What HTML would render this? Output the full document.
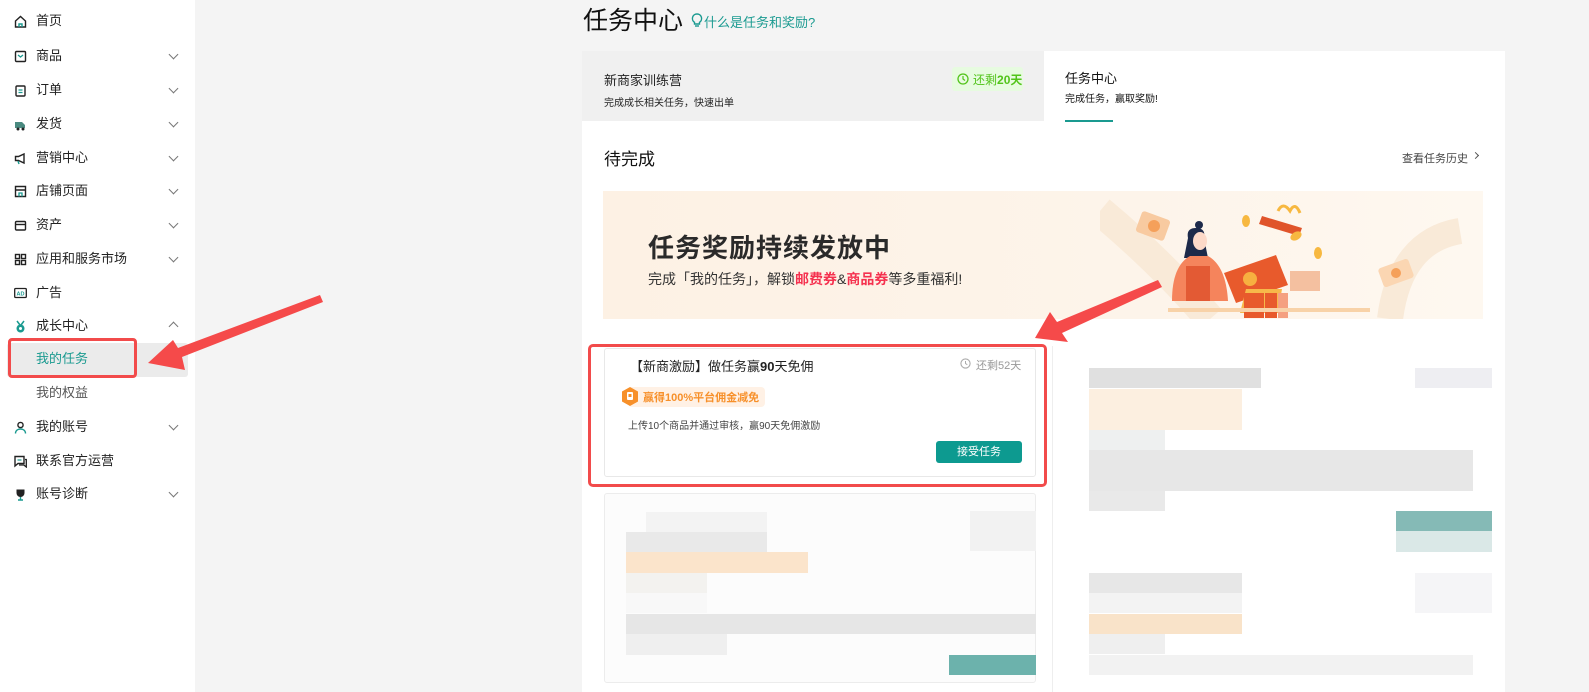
<!DOCTYPE html>
<html><head><meta charset="utf-8"><style>
*{margin:0;padding:0;box-sizing:border-box}
body{width:1589px;height:692px;overflow:hidden;background:#f4f4f4;font-family:"Liberation Sans","Noto Sans CJK SC",sans-serif;color:#222;position:relative}
.a{position:absolute}
#side{left:0;top:0;width:195px;height:692px;background:#fff}
.it{position:absolute;left:36px;font-size:13px;color:#222;line-height:16px}
.ic{position:absolute;left:14px;width:13px;height:13px}
.ch{position:absolute;left:170px;width:7px;height:7px;border-right:1.3px solid #777;border-bottom:1.3px solid #777;transform:rotate(45deg)}
.px{position:absolute}
</style></head><body>
<div id="side" class="a">
<div class="a" style="left:7px;top:343px;width:181px;height:34px;background:#ebebeb;border-radius:3px"></div>
<svg class="ic" style="top:15px" viewBox="0 0 13 13"><path d="M1.5 6L6.5 1.5 11.5 6V12H1.5Z" fill="none" stroke="#222" stroke-width="1.4"/><path d="M5 12V9h3v3" fill="none" stroke="#1a9a90" stroke-width="1.4"/></svg><div class="it" style="top:13px">首页</div>
<svg class="ic" style="top:50px" viewBox="0 0 13 13"><rect x="1.5" y="1.5" width="10" height="10" rx="1" fill="none" stroke="#222" stroke-width="1.4"/><path d="M4 5l2.5 2 2.5-2" fill="none" stroke="#1a9a90" stroke-width="1.3"/></svg><div class="it" style="top:48px">商品</div><div class="ch" style="top:51px"></div>
<svg class="ic" style="top:84px" viewBox="0 0 13 13"><rect x="2" y="2" width="9" height="10" rx="1" fill="none" stroke="#222" stroke-width="1.4"/><path d="M4.5 6h4M4.5 8.5h4" stroke="#1a9a90" stroke-width="1.2"/></svg><div class="it" style="top:82px">订单</div><div class="ch" style="top:85px"></div>
<svg class="ic" style="top:118px" viewBox="0 0 13 13"><path d="M1 4h7l3 3v3H1Z" fill="#4a8a80"/><circle cx="4" cy="11" r="1.5" fill="#222"/><circle cx="9" cy="11" r="1.5" fill="#222"/></svg><div class="it" style="top:116px">发货</div><div class="ch" style="top:119px"></div>
<svg class="ic" style="top:152px" viewBox="0 0 13 13"><path d="M1.5 4.5h3L10 2v9L4.5 8.5h-3Z" fill="none" stroke="#222" stroke-width="1.4"/><path d="M4 9l1 3" stroke="#1a9a90" stroke-width="1.4"/></svg><div class="it" style="top:150px">营销中心</div><div class="ch" style="top:153px"></div>
<svg class="ic" style="top:185px" viewBox="0 0 13 13"><path d="M1.5 1.5h10v10h-10ZM1.5 5h10" fill="none" stroke="#222" stroke-width="1.4"/><path d="M5 11.5V8h3v3.5" fill="none" stroke="#1a9a90" stroke-width="1.3"/></svg><div class="it" style="top:183px">店铺页面</div><div class="ch" style="top:186px"></div>
<svg class="ic" style="top:219px" viewBox="0 0 13 13"><rect x="1.5" y="2.5" width="10" height="8.5" rx="1" fill="none" stroke="#222" stroke-width="1.4"/><path d="M1.5 5.5h10" stroke="#222" stroke-width="1.4"/></svg><div class="it" style="top:217px">资产</div><div class="ch" style="top:220px"></div>
<svg class="ic" style="top:253px" viewBox="0 0 13 13"><g fill="none" stroke="#222" stroke-width="1.4"><rect x="1.5" y="1.5" width="4" height="4"/><rect x="7.5" y="1.5" width="4" height="4"/><rect x="1.5" y="7.5" width="4" height="4"/><rect x="7.5" y="7.5" width="4" height="4"/></g></svg><div class="it" style="top:251px">应用和服务市场</div><div class="ch" style="top:254px"></div>
<svg class="ic" style="top:287px" viewBox="0 0 13 13"><rect x="0.7" y="1.5" width="11.6" height="9" rx="1" fill="none" stroke="#222" stroke-width="1.3"/><text x="6.5" y="8.7" font-size="5.5" text-anchor="middle" fill="#1a9a90" font-family="Liberation Sans" font-weight="bold">AD</text></svg><div class="it" style="top:285px">广告</div>
<svg class="ic" style="top:320px" viewBox="0 0 13 13"><path d="M3 1l3 4M10 1L7 5" stroke="#1a9a90" stroke-width="1.5"/><circle cx="6.5" cy="8.5" r="4" fill="#1a9a90"/><circle cx="6.5" cy="8.5" r="1.5" fill="#fff"/></svg><div class="it" style="top:318px">成长中心</div><div class="ch" style="top:323px;transform:rotate(225deg)"></div>
<div class="it" style="top:351px;color:#1a9a90">我的任务</div>
<div class="it" style="top:385px;color:#555">我的权益</div>
<svg class="ic" style="top:421px" viewBox="0 0 13 13"><circle cx="6.5" cy="4" r="2.6" fill="none" stroke="#222" stroke-width="1.4"/><path d="M1.5 12.5c0-3 2.2-4.5 5-4.5s5 1.5 5 4.5" fill="none" stroke="#1a9a90" stroke-width="1.4"/></svg><div class="it" style="top:419px">我的账号</div><div class="ch" style="top:422px"></div>
<svg class="ic" style="top:455px" viewBox="0 0 13 13"><path d="M1 1.5h9v7H4l-3 2.5Z" fill="none" stroke="#222" stroke-width="1.4"/><path d="M11 4.5h1.3v7.5l-2.5-2H5" fill="none" stroke="#222" stroke-width="1.3"/><path d="M3.5 5h4" stroke="#1a9a90" stroke-width="1.2"/></svg><div class="it" style="top:453px">联系官方运营</div>
<svg class="ic" style="top:488px" viewBox="0 0 13 13"><path d="M2.5 1.5h8v3.5a4 4 0 0 1-8 0Z" fill="#222"/><path d="M6.5 9v2.5M4 12h5" stroke="#1a9a90" stroke-width="1.4"/></svg><div class="it" style="top:486px">账号诊断</div><div class="ch" style="top:489px"></div>
</div>

<div class="a" style="left:583px;top:5px;font-size:25px;color:#111;line-height:32px">任务中心</div>
<svg class="a" style="left:691px;top:13px" width="12" height="15" viewBox="0 0 12 15"><path d="M6 1a4.5 4.5 0 0 0-2.5 8.3V11h5V9.3A4.5 4.5 0 0 0 6 1Z" fill="none" stroke="#1a9a90" stroke-width="1.4"/><path d="M4 13h4" stroke="#1a9a90" stroke-width="1.4"/></svg>
<div class="a" style="left:704px;top:12px;font-size:13px;color:#1a9a90">什么是任务和奖励?</div>

<div class="a" style="left:582px;top:51px;width:923px;height:641px;background:#fff"></div>
<div class="a" style="left:582px;top:51px;width:462px;height:70px;background:#f0f0f0"></div>
<div class="a" style="left:604px;top:70px;font-size:13px;color:#222">新商家训练营</div>
<div class="a" style="left:604px;top:94px;font-size:10px;color:#222">完成成长相关任务，快速出单</div>
<div class="a" style="left:952px;top:67px;width:71px;height:24px;background:#e7fbe0;border-radius:3px"></div>
<svg class="a" style="left:957px;top:73px" width="12" height="12" viewBox="0 0 12 12"><circle cx="6" cy="6" r="5" fill="none" stroke="#52c41a" stroke-width="1.3"/><path d="M6 3v3l2 1.5" fill="none" stroke="#52c41a" stroke-width="1.2"/></svg>
<div class="a" style="left:973px;top:71px;font-size:12px;color:#52c41a">还剩<b>20天</b></div>
<div class="a" style="left:1065px;top:68px;font-size:13px;color:#111">任务中心</div>
<div class="a" style="left:1065px;top:90px;font-size:10px;color:#111">完成任务，赢取奖励!</div>
<div class="a" style="left:1065px;top:120px;width:48px;height:2px;background:#1a9a90"></div>

<div class="a" style="left:604px;top:145px;font-size:17px;color:#111">待完成</div>
<div class="a" style="left:1402px;top:150px;font-size:11px;color:#444">查看任务历史</div>
<div class="a" style="left:1473px;top:153px;width:5px;height:5px;border-right:1.2px solid #555;border-top:1.2px solid #555;transform:rotate(45deg)"></div>

<div class="a" style="left:603px;top:191px;width:880px;height:128px;background:linear-gradient(90deg,#fdf1e4,#fdf4ea 60%,#fef8f0)"></div>
<div class="a" style="left:648px;top:228px;font-size:26px;font-weight:bold;color:#2a2a2a;letter-spacing:1px">任务奖励持续发放中</div>
<div class="a" style="left:648px;top:269px;font-size:14px;color:#333">完成「我的任务」，解锁<b style="color:#f5314f">邮费券</b>&amp;<b style="color:#f5314f">商品券</b>等多重福利!</div>
<svg class="a" style="left:1100px;top:191px" width="383" height="128" viewBox="0 0 383 128">
<path d="M0 20 Q60 70 110 128" stroke="#f9ead8" stroke-width="30" fill="none"/>
<path d="M290 128 Q300 50 360 40" stroke="#f9ead8" stroke-width="26" fill="none"/>
<rect x="38" y="24" width="30" height="22" rx="3" fill="#f8caa0" transform="rotate(20 53 35)"/><circle cx="54" cy="35" r="6" fill="#f5a05a"/>
<rect x="280" y="72" width="32" height="20" rx="3" fill="#fbd6b2" transform="rotate(-20 296 82)"/><circle cx="296" cy="82" r="5" fill="#f5a05a"/>
<rect x="28" y="250" width="0" height="0"/>
<rect x="28" y="175" width="0" height="0"/>
<rect x="28" y="0" width="0" height="0"/>
<rect x="28" y="0" width="0" height="0"/>
<rect x="28" y="0" width="0" height="0"/>
<rect x="28" y="0" width="0" height="0"/>
<rect x="28" y="0" width="0" height="0"/>
<rect x="28" y="0" width="0" height="0"/>
<rect x="28" y="0" width="0" height="0"/>
<rect x="27" y="0" width="0" height="0"/>
<rect x="28" y="0" width="0" height="0"/>
<rect x="28" y="0" width="0" height="0"/>
<rect x="28" y="0" width="0" height="0"/>
<rect x="28" y="0" width="0" height="0"/>
<rect x="28" y="0" width="0" height="0"/>
<rect x="28" y="0" width="0" height="0"/>
<rect x="28" y="0" width="0" height="0"/>
<rect x="28" y="0" width="0" height="0"/>
<rect x="28" y="0" width="0" height="0"/>
<rect x="28" y="0" width="0" height="0"/>
<rect x="28" y="0" width="0" height="0"/>
<rect x="28" y="0" width="0" height="0"/>
<rect x="28" y="0" width="0" height="0"/>
<rect x="28" y="0" width="0" height="0"/>
<rect x="28" y="0" width="0" height="0"/>
<path d="M88 47 q-2-10 8-10 q10 0 8 10 l4 20 h-24Z" fill="#1d2a4a"/>
<circle cx="99" cy="34" r="4" fill="#1d2a4a"/>
<ellipse cx="100" cy="50" rx="7" ry="9" fill="#fcd9c8"/>
<path d="M72 110 q0-35 18-45 h18 q18 10 20 45Z" fill="#f5845c"/>
<rect x="86" y="75" width="24" height="35" fill="#e35a34"/>
<path d="M190 80 h30 v20 h-30Z" fill="#f4c0a0"/>
<path d="M124 82 l52-18 l12 30 l-52 18Z" fill="#e85a2c"/>
<circle cx="150" cy="88" r="7" fill="#f7b040"/>
<path d="M140 122 l6-24 h36 l-4 24Z" fill="#f7b84a"/>
<rect x="144" y="102" width="20" height="25" fill="#e85a2c"/>
<rect x="165" y="102" width="12" height="25" fill="#e85a2c"/>
<rect x="178" y="102" width="10" height="25" fill="#f5a080"/>
<path d="M196 120 l8-0" stroke="#000" stroke-width="0"/>
<rect x="68" y="117" width="202" height="4" fill="#f8d2a8"/>
<path d="M162 25 l40 12 l-3 8 l-40-12Z" fill="#e0542a"/>
<path d="M178 20 q5-10 12 0 q5-10 10 2" fill="none" stroke="#f7b840" stroke-width="3"/>
<ellipse cx="146" cy="30" rx="4" ry="6" fill="#f7b840"/>
<ellipse cx="218" cy="62" rx="4" ry="6" fill="#f7b840"/>
<ellipse cx="196" cy="45" rx="4" ry="6" fill="#f7b840" transform="rotate(60 196 45)"/>
<ellipse cx="182" cy="108" rx="0" ry="0" fill="#f7b840"/>
<ellipse cx="239" cy="42" rx="0" ry="0"/>
</svg>

<!-- card 1 -->
<div class="a" style="left:604px;top:348px;width:432px;height:129px;border:1px solid #e8e8e8;border-radius:3px;background:#fff"></div>
<div class="a" style="left:630px;top:356px;font-size:13px;color:#222">【新商激励】做任务赢<b>90</b>天免佣</div>
<svg class="a" style="left:960px;top:358px" width="11" height="11" viewBox="0 0 11 11"><circle cx="5.5" cy="5.5" r="4.6" fill="none" stroke="#aaa" stroke-width="1.1"/><path d="M5.5 3v2.5l1.8 1.2" fill="none" stroke="#aaa" stroke-width="1"/></svg>
<div class="a" style="left:976px;top:357px;font-size:11px;color:#999">还剩52天</div>
<div class="a" style="left:628px;top:387px;width:137px;height:20px;background:#fff1e5;border-radius:4px"></div>
<svg class="a" style="left:620px;top:386px" width="20" height="22" viewBox="0 0 20 22"><path d="M10 1l8 4.5v10L10 20l-8-4.5v-10Z" fill="#f7902a"/><rect x="7" y="6" width="6" height="8" fill="#fff" rx="1"/><rect x="8.5" y="8" width="3" height="3" fill="#f7902a"/></svg>
<div class="a" style="left:643px;top:389px;font-size:11px;color:#f7902a;font-weight:bold">赢得100%平台佣金减免</div>
<div class="a" style="left:628px;top:417px;font-size:10px;color:#444">上传10个商品并通过审核，赢90天免佣激励</div>
<div class="a" style="left:936px;top:441px;width:86px;height:22px;background:#0d9a90;border-radius:3px;color:#fff;font-size:11px;text-align:center;line-height:22px">接受任务</div>

<!-- card 2 pixelated -->
<div class="a" style="left:604px;top:493px;width:432px;height:190px;border:1px solid #ececec;border-radius:3px;background:#fcfcfc"></div>
<div class="px" style="left:646px;top:512px;width:121px;height:20px;background:#f3f3f3"></div>
<div class="px" style="left:626px;top:532px;width:141px;height:20px;background:#e9e9e9"></div>
<div class="px" style="left:626px;top:552px;width:182px;height:21px;background:#fbe4cb"></div>
<div class="px" style="left:626px;top:573px;width:81px;height:20px;background:#f3f2ef"></div>
<div class="px" style="left:626px;top:593px;width:81px;height:20px;background:#f8f8f8"></div>
<div class="px" style="left:626px;top:614px;width:410px;height:20px;background:#e6e6e6"></div>
<div class="px" style="left:626px;top:634px;width:101px;height:21px;background:#efefef"></div>
<div class="px" style="left:949px;top:655px;width:87px;height:20px;background:#6cb2ac"></div>
<div class="px" style="left:970px;top:511px;width:66px;height:40px;background:#f2f2f2"></div>

<!-- right column pixelated -->
<div class="a" style="left:1052px;top:346px;width:1px;height:346px;background:#eee"></div>
<div class="px" style="left:1089px;top:368px;width:172px;height:20px;background:#e0e0e0"></div>
<div class="px" style="left:1415px;top:368px;width:77px;height:20px;background:#eeeef2"></div>
<div class="px" style="left:1089px;top:389px;width:153px;height:41px;background:#fcefe0"></div>
<div class="px" style="left:1089px;top:430px;width:76px;height:20px;background:#eef0f0"></div>
<div class="px" style="left:1089px;top:450px;width:384px;height:41px;background:#e7e7e7"></div>
<div class="px" style="left:1089px;top:491px;width:76px;height:20px;background:#e9e9e9"></div>
<div class="px" style="left:1396px;top:511px;width:96px;height:20px;background:#85bab6"></div>
<div class="px" style="left:1396px;top:531px;width:96px;height:21px;background:#dae8e7"></div>
<div class="px" style="left:1089px;top:573px;width:153px;height:20px;background:#e7e7e7"></div>
<div class="px" style="left:1089px;top:593px;width:153px;height:20px;background:#f3f3f3"></div>
<div class="px" style="left:1415px;top:573px;width:77px;height:40px;background:#f5f5f7"></div>
<div class="px" style="left:1089px;top:614px;width:153px;height:20px;background:#f9e3c9"></div>
<div class="px" style="left:1089px;top:634px;width:76px;height:20px;background:#efefef"></div>
<div class="px" style="left:1089px;top:655px;width:384px;height:20px;background:#f2f2f2"></div>

<!-- red highlights -->
<div class="a" style="left:8px;top:338px;width:129px;height:40px;border:3px solid #f24b4b;border-radius:4px"></div>
<div class="a" style="left:588px;top:344px;width:459px;height:143px;border:3px solid #f24b4b;border-radius:5px"></div>
<svg class="a" style="left:0;top:0" width="1589" height="692">
<polygon points="148,363 173,340 178,348 320,295 323,302 182,357 185,370" fill="#f54a4a"/>
<polygon points="1035,338 1050,312 1057,322 1158,280 1162,287 1062,333 1068,342" fill="#f54a4a"/>
</svg>
</body></html>
